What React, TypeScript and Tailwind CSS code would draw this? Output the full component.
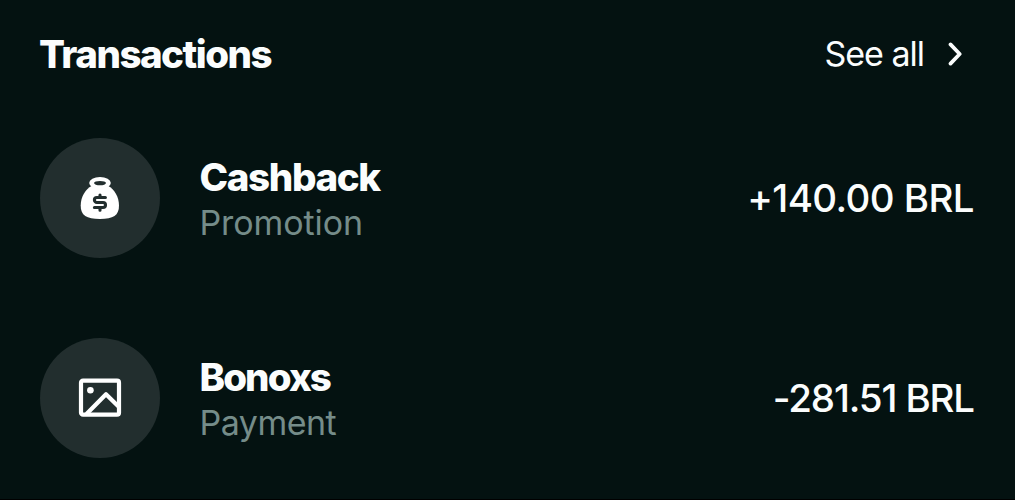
import type { ReactNode } from "react";

type Transaction = {
    name: string;
    nameClass: string;
    kind: string;
    kindClass: string;
    amount: string;
    amountClass: string;
    icon: ReactNode;
}

function MoneyBagIcon() {
    return (
        <svg viewBox="0 0 48 48" className="w-12 h-12" fill="none">
            <path fill="#fff" d="M15.5 12C10 15 4.7 22.3 4.7 31.5C4.7 41.5 10.5 45 23.9 45S43 41.5 43 31.5C43 22.3 37.8 15 32.3 12Z" />
            <ellipse cx="24" cy="9" rx="10.8" ry="6.1" fill="#fff" />
            <ellipse cx="24" cy="9.1" rx="6" ry="2.2" fill="#222e2e" />
            <path d="M29.4 23.5H20.9a2.5 2.5 0 0 0 0 5H27a2.5 2.5 0 0 1 0 5H18.4M24 21V23.5M24 33.5V36.2" stroke="#222e2e" strokeWidth="3.1" strokeLinecap="round" />
        </svg>
    )
}

function PictureIcon() {
    return (
        <svg viewBox="0 0 48 48" className="w-12 h-12" fill="none" stroke="#fff" strokeWidth="4.2" strokeLinejoin="round">
            <rect x="5" y="6.7" width="38" height="34" rx="2" />
            <path d="M10.5 40L30 20.3L43 33" />
            <circle cx="14.4" cy="16.3" r="3.3" fill="#fff" stroke="none" />
        </svg>
    )
}

const transactions: Transaction[] = [
    {
        name: "Cashback",
        nameClass: "tracking-[-1.35px]",
        kind: "Promotion",
        kindClass: "tracking-[-0.1px]",
        amount: "+140.00 BRL",
        amountClass: "tracking-[-0.6px]",
        icon: <MoneyBagIcon />,
    },
    {
        name: "Bonoxs",
        nameClass: "tracking-[-1.9px]",
        kind: "Payment",
        kindClass: "tracking-[-0.5px]",
        amount: "-281.51 BRL",
        amountClass: "tracking-[-1.15px]",
        icon: <PictureIcon />,
    },
];

function Row({ name, nameClass, kind, kindClass, amount, amountClass, icon }: Transaction) {
    return (
        <li className="flex items-center h-[120px]">
            <div className="flex items-center justify-center shrink-0 w-[120px] h-[120px] rounded-full bg-[#222e2e]">
                {icon}
            </div>
            <div className="ml-[39.5px] pt-1 whitespace-nowrap">
                <div className={`text-[38.5px] leading-[45px] font-extrabold ${nameClass}`}>{name}</div>
                <div className={`text-[34px] leading-[45px] font-normal text-[#758c89] ${kindClass}`}>{kind}</div>
            </div>
            <div className={`ml-auto text-[38.5px] leading-[46px] font-medium whitespace-nowrap ${amountClass}`}>{amount}</div>
        </li>
    )
}

export default function App() {
    return (
        <main className="w-full h-[500px] overflow-hidden bg-[#041211] border-b border-black pl-10 pr-[41px] text-[#fbfdfd] font-['Inter',sans-serif]">
            <header className="flex items-center justify-between h-[108px] pr-3">
                <h1 className="-ml-px text-[38.5px] leading-[46px] font-extrabold tracking-[-1.5px]">Transactions</h1>
                <a href="#" className="flex items-center gap-6">
                    <span className="text-[34px] leading-[44px] tracking-[-1px]">See all</span>
                    <svg viewBox="0 0 14 24" className="w-[14px] h-6" fill="none" stroke="currentColor" strokeWidth="3.7" strokeLinecap="round" strokeLinejoin="round">
                        <path d="M2.5 2.4L11.7 12L2.5 21.6" />
                    </svg>
                </a>
            </header>
            <ul className="flex flex-col gap-20 pt-[30px]">
                {transactions.map((t) => <Row key={t.name} {...t} />)}
            </ul>
        </main>
    )
}
